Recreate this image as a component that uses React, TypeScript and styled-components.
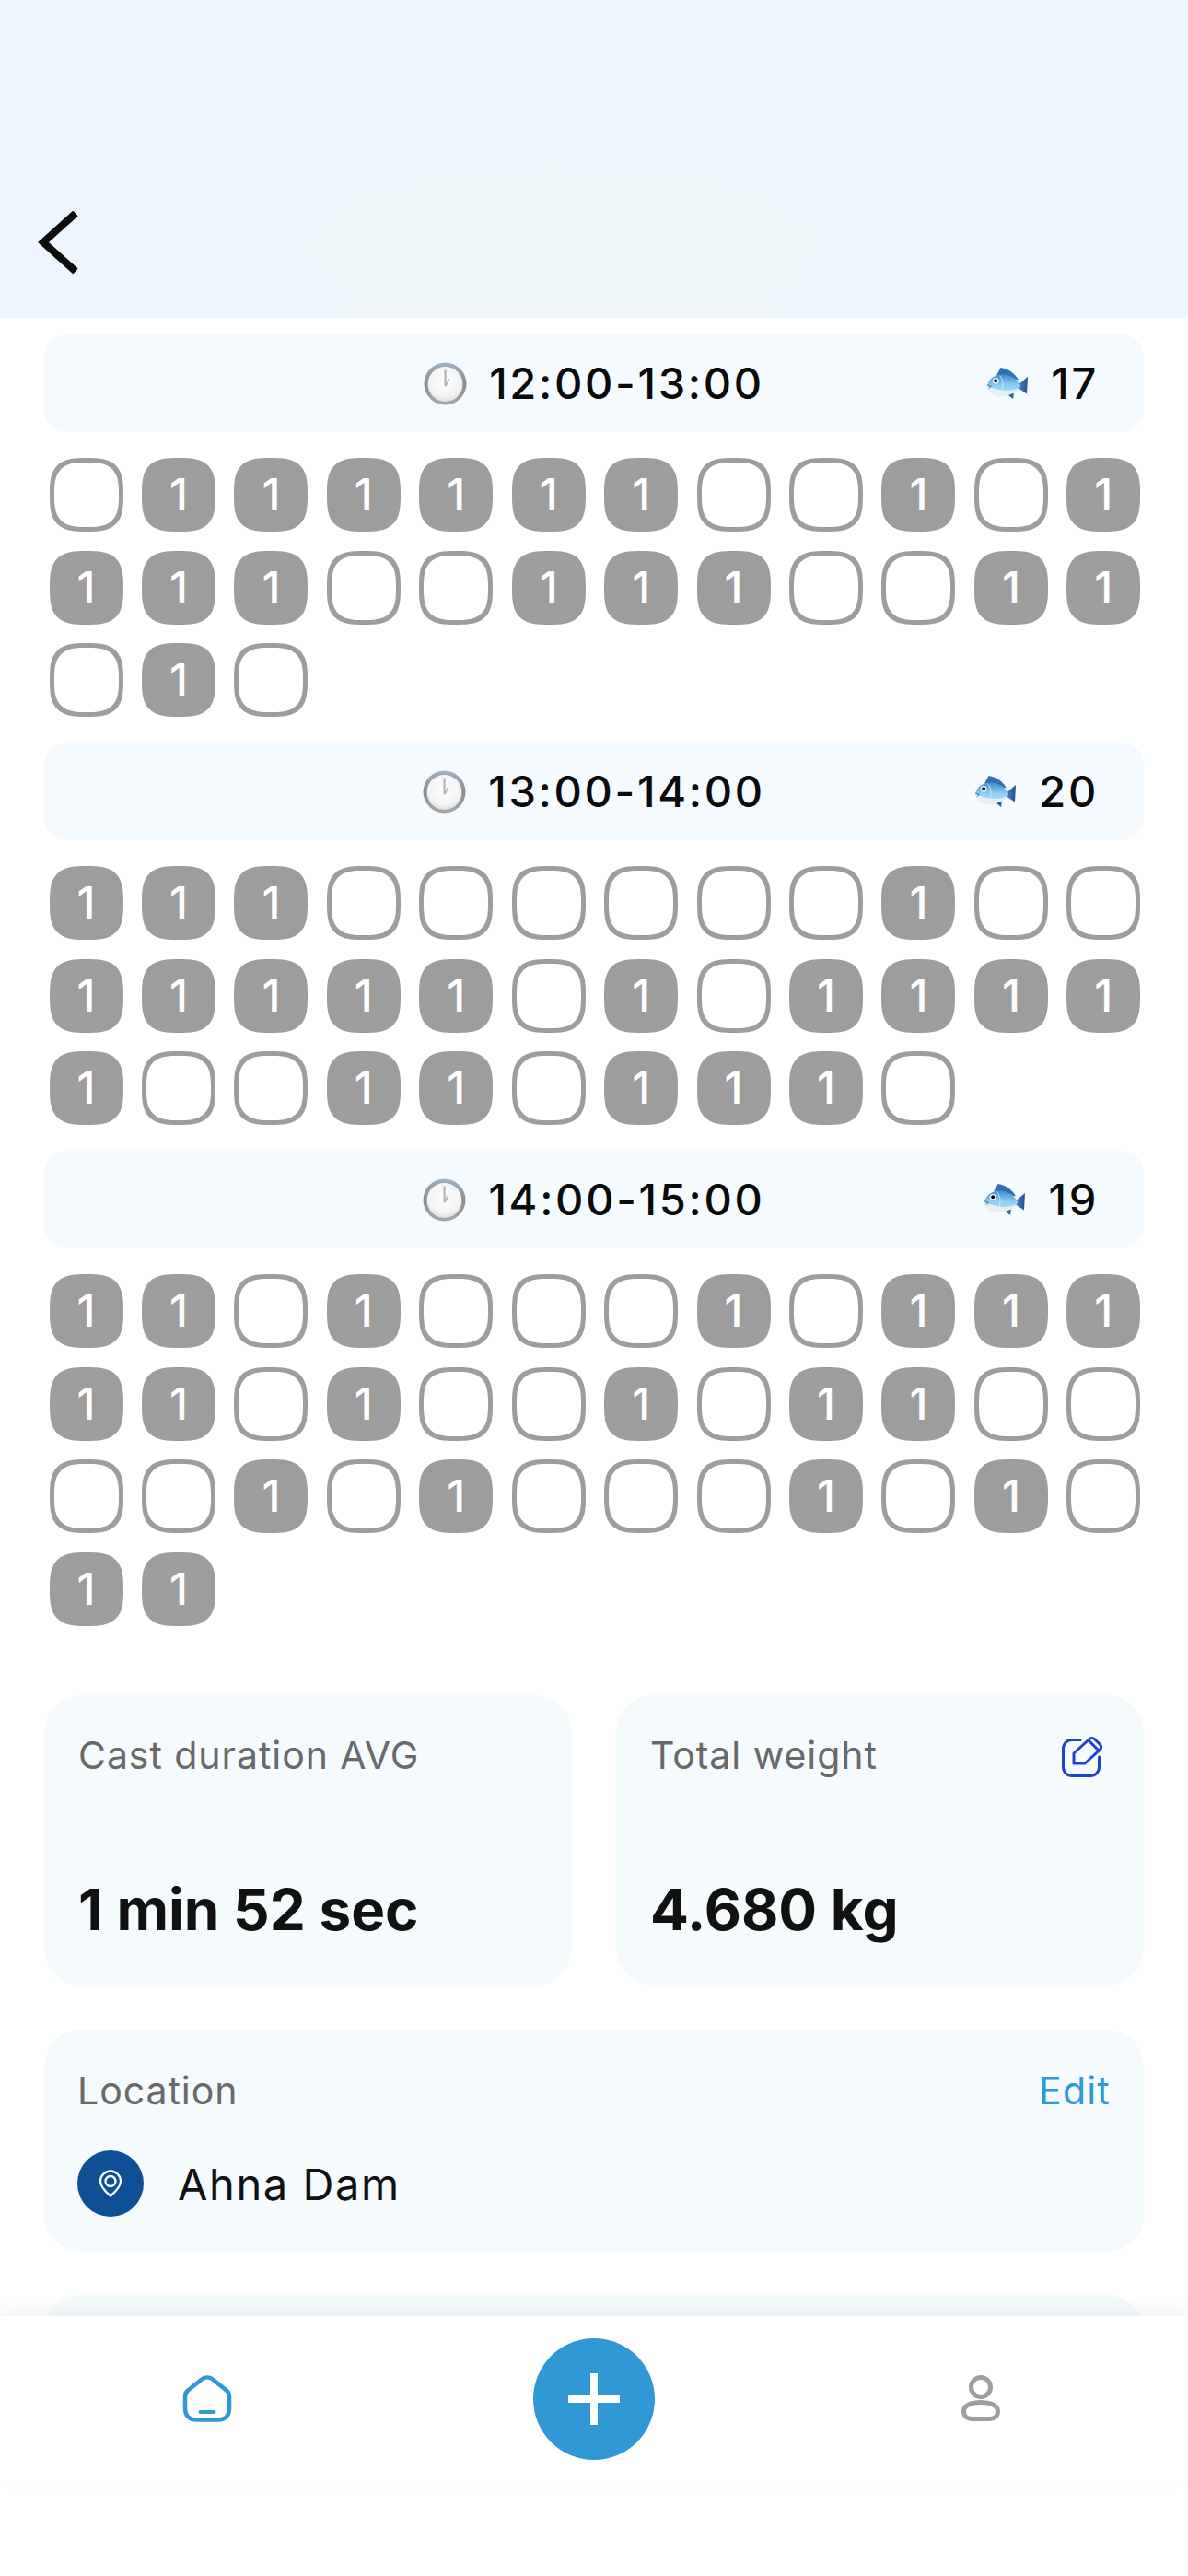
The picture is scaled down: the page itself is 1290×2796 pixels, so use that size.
import React from "react";
import styled, { createGlobalStyle } from "styled-components";

const Global = createGlobalStyle`
  html, body { margin: 0; padding: 0; background: #fff; }
  body { width: 1290px; height: 2796px; overflow: hidden; font-family: Inter, "Noto Sans", sans-serif; }
`;

const Page = styled.div`
  position: relative;
  width: 1290px;
  height: 2796px;
  overflow: hidden;
  background: #fff;
`;

const Header = styled.header`
  height: 345px;
  box-sizing: border-box;
  padding: 229px 0 0 40px;
  background: radial-gradient(ellipse 420px 130px at 610px 270px, #eef6fa 0%, #eef6fa 60%, #edf6fe 100%), #edf6fe;
`;

const BackIcon = styled.svg`
  display: block;
  width: 46px;
  height: 68px;
`;

const Content = styled.main`
  display: flex;
  flex-direction: column;
  padding: 18px 48px 0;
`;

const HourBlock = styled.section`
  display: flex;
  flex-direction: column;
  margin-bottom: 28px;
`;

const TimeBar = styled.div`
  display: grid;
  grid-template-columns: 1fr auto 1fr;
  align-items: center;
  height: 106px;
  background: #f5fafe;
  border-radius: 24px;
`;

const TimeGroup = styled.div`
  grid-column: 2;
  display: flex;
  align-items: center;
  gap: 24px;
`;

const CountGroup = styled.div`
  justify-self: end;
  display: flex;
  align-items: center;
  gap: 25px;
  margin-right: 49px;
`;

const BarText = styled.span`
  font-size: 47px;
  font-weight: 500;
  letter-spacing: 2.7px;
  line-height: 56px;
  color: #0a0a0a;
`;

const TileGrid = styled.div`
  display: grid;
  grid-template-columns: repeat(12, 80px);
  grid-auto-rows: 80px;
  column-gap: 20.45px;
  row-gap: 20.5px;
  padding: 28px 0 0 5.5px;
`;

const Tile = styled.div<{ $on: boolean }>`
  display: flex;
  align-items: center;
  justify-content: center;
  box-sizing: border-box;
  border-radius: 40px;
  corner-shape: superellipse(1.6);
  border: 5px solid #9d9d9d;
  background: ${(p) => (p.$on ? "#9d9d9d" : "#fff")};
  color: #fff;
  font-size: 48px;
  font-weight: 500;
  line-height: 1;
`;

const StatsRow = styled.div`
  display: grid;
  grid-template-columns: 573px 573px;
  column-gap: 48px;
  margin-top: 47.5px;
`;

const StatCard = styled.div`
  display: flex;
  flex-direction: column;
  justify-content: space-between;
  box-sizing: border-box;
  height: 315px;
  padding: 40px 36px 46px 37px;
  background: #f5fafd;
  border-radius: 40px;
`;

const StatHead = styled.div`
  display: flex;
  align-items: center;
  justify-content: space-between;
  height: 50px;
`;

const Label = styled.span`
  font-size: 41px;
  font-weight: 400;
  letter-spacing: 0.95px;
  line-height: 50px;
  color: #696969;
`;

const StatValue = styled.div`
  font-size: 62px;
  font-weight: 700;
  line-height: 72px;
  color: #111;
`;

const EditIcon = styled.svg`
  display: block;
  width: 50px;
  height: 50px;
  margin: 0 6px 0 0;
`;

const LocationCard = styled.div`
  display: flex;
  flex-direction: column;
  box-sizing: border-box;
  height: 241px;
  margin-top: 48px;
  padding: 41px 36px;
  background: #f5fafd;
  border-radius: 40px;
`;

const LocationHead = styled.div`
  display: flex;
  align-items: center;
  justify-content: space-between;
  height: 50px;
`;

const EditLink = styled.span`
  font-size: 41px;
  letter-spacing: 1.2px;
  line-height: 50px;
  color: #3098d5;
`;

const LocationRow = styled.div`
  display: flex;
  align-items: center;
  gap: 37px;
  margin-top: 40px;
`;

const PinBadge = styled.div`
  display: flex;
  align-items: center;
  justify-content: center;
  width: 72px;
  height: 72px;
  border-radius: 50%;
  background: #0e4f95;
`;

const PinIcon = styled.svg`
  display: block;
  width: 26px;
  height: 30px;
`;

const PlaceName = styled.span`
  font-size: 47px;
  font-weight: 400;
  letter-spacing: 1.6px;
  color: #111;
`;

const NextCard = styled.div`
  height: 120px;
  margin-top: 47px;
  background: #f5fafd;
  border-radius: 40px;
`;

const TabBar = styled.nav`
  position: absolute;
  left: 0;
  right: 0;
  top: 2514px;
  height: 180px;
  display: grid;
  grid-template-columns: repeat(3, 420px);
  justify-content: center;
  align-items: center;
  background: #fff;
  box-shadow: 0 -6px 20px rgba(0, 0, 0, 0.06);
`;

const TabSlot = styled.div`
  display: flex;
  justify-content: center;
`;

const PlusButton = styled.div`
  display: flex;
  align-items: center;
  justify-content: center;
  width: 132px;
  height: 132px;
  border-radius: 50%;
  background: #3098d5;
`;

const PlusIcon = styled.svg`
  display: block;
  width: 56px;
  height: 56px;
`;

const TabIcon = styled.svg`
  display: block;
  width: 56px;
  height: 56px;
`;

const Clock = () => (
  <svg width="47" height="47" viewBox="0 0 47 47" aria-hidden="true">
    <defs>
      <linearGradient id="clockRim" x1="0" y1="0" x2="0" y2="1">
        <stop offset="0" stopColor="#9fb2c6" />
        <stop offset="0.5" stopColor="#8c8c8c" />
        <stop offset="1" stopColor="#a8a8a8" />
      </linearGradient>
      <radialGradient id="clockFace" cx="0.5" cy="0.4" r="0.65">
        <stop offset="0" stopColor="#fdfdfd" />
        <stop offset="0.7" stopColor="#f3f3f3" />
        <stop offset="1" stopColor="#d8d8d8" />
      </radialGradient>
    </defs>
    <circle cx="23.5" cy="23.5" r="23" fill="url(#clockRim)" />
    <circle cx="23.5" cy="24" r="19" fill="url(#clockFace)" />
    <path d="M22.500 8.500h2.200v17.500h-2.200zM23 26l4-8 1.600.8-4 8z" fill="#b0b4ba" />
  </svg>
);

const Fish = () => (
  <svg width="44" height="34" viewBox="65 68 130 100" aria-hidden="true">
    <defs>
      <linearGradient id="fishBody" x1="0" y1="0" x2="0" y2="1">
        <stop offset="0" stopColor="#3f8ccb" />
        <stop offset="0.5" stopColor="#8ecff3" />
        <stop offset="1" stopColor="#a8dcf6" />
      </linearGradient>
      <linearGradient id="fishTail" x1="0" y1="0" x2="1" y2="0">
        <stop offset="0" stopColor="#4a8ac6" />
        <stop offset="1" stopColor="#234f8f" />
      </linearGradient>
    </defs>
    <path d="M95 92 108 68C135 72 155 88 165 108Z" fill="#2f6fb3" />
    <path d="M163 124 195 97 192 152 163 133Z" fill="url(#fishTail)" />
    <path d="M125 150 150 150 148 168 135 158Z" fill="#2f6299" />
    <path d="M65 125C70 100 95 88 120 90 145 92 165 110 172 127 160 147 135 160 105 160 85 160 68 145 65 125Z" fill="url(#fishBody)" />
    <path d="M66 128C80 130 100 141 130 141 150 141 162 136 170 129 157 148 132 160 105 160 85 160 70 147 66 128Z" fill="#e8eef3" />
    <path d="M105 93C118 108 118 130 108 154" fill="none" stroke="#d5eefb" strokeWidth="2.500" />
    <circle cx="92" cy="110" r="10" fill="#f2f7fb" />
    <circle cx="92" cy="110" r="6" fill="#0d0d0d" />
    <path d="M66 123 78 128 70 134" fill="none" stroke="#3a5570" strokeWidth="2.500" />
  </svg>
);

type Hour = { time: string; count: string; tiles: number[] };

const hours: Hour[] = [
  {
    time: "12:00-13:00",
    count: "17",
    tiles: [0,1,1,1,1,1,1,0,0,1,0,1, 1,1,1,0,0,1,1,1,0,0,1,1, 0,1,0],
  },
  {
    time: "13:00-14:00",
    count: "20",
    tiles: [1,1,1,0,0,0,0,0,0,1,0,0, 1,1,1,1,1,0,1,0,1,1,1,1, 1,0,0,1,1,0,1,1,1,0],
  },
  {
    time: "14:00-15:00",
    count: "19",
    tiles: [1,1,0,1,0,0,0,1,0,1,1,1, 1,1,0,1,0,0,1,0,1,1,0,0, 0,0,1,0,1,0,0,0,1,0,1,0, 1,1],
  },
];

export default function App() {
  return (
    <Page>
      <Global />
      <Header>
        <BackIcon viewBox="0 0 46 68" aria-hidden="true">
          <path d="M42 2.500 7 34l35 31.500" fill="none" stroke="#0d0d0d" strokeWidth="8" />
        </BackIcon>
      </Header>
      <Content>
        {hours.map((h) => (
          <HourBlock key={h.time}>
            <TimeBar>
              <TimeGroup>
                <Clock />
                <BarText>{h.time}</BarText>
              </TimeGroup>
              <CountGroup>
                <Fish />
                <BarText>{h.count}</BarText>
              </CountGroup>
            </TimeBar>
            <TileGrid>
              {h.tiles.map((t, i) => (
                <Tile key={i} $on={t === 1}>{t === 1 ? "1" : ""}</Tile>
              ))}
            </TileGrid>
          </HourBlock>
        ))}
        <StatsRow>
          <StatCard>
            <StatHead><Label>Cast duration AVG</Label></StatHead>
            <StatValue>1 min 52 sec</StatValue>
          </StatCard>
          <StatCard>
            <StatHead>
              <Label>Total weight</Label>
              <EditIcon viewBox="0 0 50 50" fill="none" stroke="#2040d0" strokeWidth="3" strokeLinejoin="round" strokeLinecap="round" aria-hidden="true">
                <path d="M23 8.500H14a9.500 9.500 0 0 0-9.500 9.500V38a9.500 9.500 0 0 0 9.500 9.500h20a9.500 9.500 0 0 0 9.500-9.500V27" />
                <path d="M16 23 33 7.500a4 4 0 0 1 5.500 0l6 6a4 4 0 0 1 0 5.500L28 34H16z" />
                <path d="M32 9l11 11" />
              </EditIcon>
            </StatHead>
            <StatValue>4.680 kg</StatValue>
          </StatCard>
        </StatsRow>
        <LocationCard>
          <LocationHead>
            <Label>Location</Label>
            <EditLink>Edit</EditLink>
          </LocationHead>
          <LocationRow>
            <PinBadge>
              <PinIcon viewBox="0 0 26 30" fill="none" stroke="#fff" strokeWidth="2.300" aria-hidden="true">
                <path d="M13 28.500C7 23.500 2 18.500 2 12.500a11 11 0 0 1 22 0c0 6-5 11-11 16z" strokeLinejoin="round" />
                <circle cx="13" cy="12.500" r="5.500" />
              </PinIcon>
            </PinBadge>
            <PlaceName>Ahna Dam</PlaceName>
          </LocationRow>
        </LocationCard>
        <NextCard />
      </Content>
      <TabBar>
        <TabSlot>
          <TabIcon viewBox="0 0 56 56" fill="none" stroke="#3098d5" strokeWidth="4.500" aria-hidden="true">
            <path d="M4 25c0-3 1-5 3.500-6.800L22 6.500c3.500-2.600 8.500-2.600 12 0l14.500 11.700c2.500 1.800 3.500 3.800 3.500 6.800v13c0 8-4.500 12.500-12 12.500H16C8.500 50.500 4 46 4 38z" strokeLinejoin="round" />
            <path d="M20.500 42h15" strokeWidth="4" strokeLinecap="round" />
          </TabIcon>
        </TabSlot>
        <TabSlot>
          <PlusButton>
            <PlusIcon viewBox="0 0 56 56" aria-hidden="true">
              <path d="M24 0h8v24h24v8H32v24h-8V32H0v-8h24z" fill="#fff" />
            </PlusIcon>
          </PlusButton>
        </TabSlot>
        <TabSlot>
          <TabIcon viewBox="0 0 56 56" fill="none" stroke="#9e9e9e" strokeWidth="5" aria-hidden="true">
            <circle cx="28" cy="15" r="10.500" />
            <path d="M9.500 41c0-6 8-9.500 18.500-9.500S46.500 35 46.500 41c0 5.500-4 8.500-9 8.500H18.500c-5 0-9-3-9-8.500z" />
          </TabIcon>
        </TabSlot>
      </TabBar>
    </Page>
  );
}
